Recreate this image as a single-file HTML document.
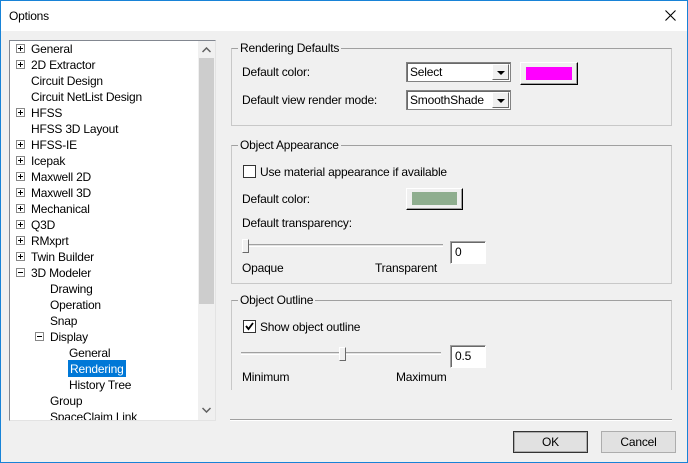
<!DOCTYPE html>
<html><head><meta charset="utf-8"><style>
*{margin:0;padding:0;box-sizing:border-box}
body{width:688px;height:463px;overflow:hidden;background:#f0f0f0;font-family:"Liberation Sans",Arial,sans-serif;font-size:12px;letter-spacing:-0.2px;color:#000;position:relative}
.a{position:absolute;white-space:nowrap}
.win{position:absolute;left:0;top:0;width:688px;height:463px;border:1px solid #1883d7}
.title{position:absolute;left:1px;top:1px;width:686px;height:30px;background:#fff}
.tree{position:absolute;left:9px;top:40px;width:207px;height:381px;background:#fff;border:1px solid #828790;border-right-color:#e3e3e3;border-bottom-color:#e3e3e3}
.pm{position:absolute;width:9px;height:9px;border:1px solid #888;background:#fff}
.pm:before{content:"";position:absolute;left:1px;top:3px;width:5px;height:1px;background:#000}
.pm.p:after{content:"";position:absolute;left:3px;top:1px;width:1px;height:5px;background:#000}
.gb{position:absolute;border:1px solid #c8c8c8;border-top-color:#a0a0a0}
.gb>span{position:absolute;left:6px;top:-8px;background:#f0f0f0;padding:0 2px}
.combo{position:absolute;background:#fff;border:1px solid #828282;box-shadow:inset 1px 1px 0 #696969;height:20px;padding:2px 3px}
.dd{position:absolute;right:1px;top:1px;width:17px;height:16px;background:#f0f0f0;border:1px solid #fff;border-right-color:#696969;border-bottom-color:#696969}
.dd:after{content:"";position:absolute;left:4px;top:6px;border-left:4px solid transparent;border-right:4px solid transparent;border-top:4px solid #000}
.cbtn{position:absolute;background:#f0f0f0;border:1px solid #fff;border-right-color:#000;border-bottom-color:#000;box-shadow:inset -1px -1px 0 #a0a0a0}
.edit{position:absolute;background:#fff;border:1px solid #a0a0a0;border-right-color:#fff;border-bottom-color:#fff;box-shadow:inset 1px 1px 0 #696969;padding:3px 4px}
.track{position:absolute;height:3px;border-top:1px solid #a0a0a0;border-bottom:1px solid #fff;background:#e3e3e3}
.thumb{position:absolute;width:7px;height:14px;background:#f0f0f0;border:1px solid #fff;border-right-color:#696969;border-bottom-color:#696969}
.btn{position:absolute;background:#e1e1e1;border:1px solid #adadad;text-align:center;line-height:20px}
</style></head><body>
<div class="win"></div>
<div class="title"></div>
<div class="a" style="left:9px;top:9px;font-size:12px">Options</div>
<svg class="a" style="left:665px;top:10px" width="11" height="11"><path d="M0.5 0.5L10.5 10.5M10.5 0.5L0.5 10.5" stroke="#000" stroke-width="1.1"/></svg>

<div class="tree">
<div class="a" style="left:188px;top:0;width:17px;height:379px;background:#f0f0f0"></div>
<div class="a" style="left:189px;top:17px;width:15px;height:246px;background:#cdcdcd"></div>
<svg class="a" style="left:192px;top:6px" width="9" height="6"><path d="M0.5 5L4.5 1L8.5 5" stroke="#606060" stroke-width="1.5" fill="none"/></svg>
<svg class="a" style="left:192px;top:366px" width="9" height="6"><path d="M0.5 1L4.5 5L8.5 1" stroke="#606060" stroke-width="1.5" fill="none"/></svg>
</div>
<div class="a" style="left:10px;top:42px;width:188px;height:378px;overflow:hidden">
<div class="pm p" style="left:6px;top:2px"></div><div class="a" style="left:21px;top:0px">General</div>
<div class="pm p" style="left:6px;top:18px"></div><div class="a" style="left:21px;top:16px">2D Extractor</div>
<div class="a" style="left:21px;top:32px">Circuit Design</div>
<div class="a" style="left:21px;top:48px">Circuit NetList Design</div>
<div class="pm p" style="left:6px;top:66px"></div><div class="a" style="left:21px;top:64px">HFSS</div>
<div class="a" style="left:21px;top:80px">HFSS 3D Layout</div>
<div class="pm p" style="left:6px;top:98px"></div><div class="a" style="left:21px;top:96px">HFSS-IE</div>
<div class="pm p" style="left:6px;top:114px"></div><div class="a" style="left:21px;top:112px">Icepak</div>
<div class="pm p" style="left:6px;top:130px"></div><div class="a" style="left:21px;top:128px">Maxwell 2D</div>
<div class="pm p" style="left:6px;top:146px"></div><div class="a" style="left:21px;top:144px">Maxwell 3D</div>
<div class="pm p" style="left:6px;top:162px"></div><div class="a" style="left:21px;top:160px">Mechanical</div>
<div class="pm p" style="left:6px;top:178px"></div><div class="a" style="left:21px;top:176px">Q3D</div>
<div class="pm p" style="left:6px;top:194px"></div><div class="a" style="left:21px;top:192px">RMxprt</div>
<div class="pm p" style="left:6px;top:210px"></div><div class="a" style="left:21px;top:208px">Twin Builder</div>
<div class="pm" style="left:6px;top:226px"></div><div class="a" style="left:21px;top:224px">3D Modeler</div>
<div class="a" style="left:40px;top:240px">Drawing</div>
<div class="a" style="left:40px;top:256px">Operation</div>
<div class="a" style="left:40px;top:272px">Snap</div>
<div class="pm" style="left:25px;top:290px"></div><div class="a" style="left:40px;top:288px">Display</div>
<div class="a" style="left:59px;top:304px">General</div>
<div class="a" style="left:58px;top:318px;background:#0078d7;color:#fff;padding:2px 2px;height:17px;line-height:14px">Rendering</div>
<div class="a" style="left:59px;top:336px">History Tree</div>
<div class="a" style="left:40px;top:352px">Group</div>
<div class="a" style="left:40px;top:368px">SpaceClaim Link</div>
</div>

<div class="gb" style="left:231px;top:48px;width:441px;height:78px"><span>Rendering Defaults</span></div>
<div class="a" style="left:242px;top:65px">Default color:</div>
<div class="a" style="left:242px;top:93px">Default view render mode:</div>
<div class="combo" style="left:406px;top:62px;width:105px">Select<div class="dd"></div></div>
<div class="combo" style="left:406px;top:90px;width:105px">SmoothShade<div class="dd"></div></div>
<div class="cbtn" style="left:520px;top:62px;width:58px;height:23px"><div class="a" style="left:5px;top:4px;width:46px;height:13px;background:#ff00ff"></div></div>

<div class="gb" style="left:231px;top:145px;width:441px;height:139px"><span>Object Appearance</span></div>
<div class="a" style="left:243px;top:165px;width:13px;height:13px;background:#fff;border:1px solid #333"></div>
<div class="a" style="left:260px;top:165px">Use material appearance if available</div>
<div class="a" style="left:242px;top:192px">Default color:</div>
<div class="cbtn" style="left:406px;top:188px;width:57px;height:22px"><div class="a" style="left:5px;top:3px;width:45px;height:13px;background:#8fae8f"></div></div>
<div class="a" style="left:242px;top:216px">Default transparency:</div>
<div class="track" style="left:242px;top:244px;width:201px"></div>
<div class="thumb" style="left:242px;top:239px"></div>
<div class="edit" style="left:450px;top:241px;width:36px;height:23px">0</div>
<div class="a" style="left:242px;top:261px">Opaque</div>
<div class="a" style="left:375px;top:261px">Transparent</div>

<div class="gb" style="left:231px;top:300px;width:441px;height:90px;border-bottom:none"><span>Object Outline</span></div>
<div class="a" style="left:243px;top:320px;width:13px;height:13px;background:#fff;border:1px solid #333"></div>
<svg class="a" style="left:245px;top:322px" width="9" height="9"><path d="M1 4L3.5 7L8 1" stroke="#000" stroke-width="1.8" fill="none"/></svg>
<div class="a" style="left:260px;top:320px">Show object outline</div>
<div class="track" style="left:241px;top:352px;width:200px"></div>
<div class="thumb" style="left:339px;top:347px"></div>
<div class="edit" style="left:450px;top:345px;width:36px;height:23px">0.5</div>
<div class="a" style="left:242px;top:370px">Minimum</div>
<div class="a" style="left:396px;top:370px">Maximum</div>

<div class="a" style="left:230px;top:419px;width:442px;height:2px;border-top:1px solid #a0a0a0;border-bottom:1px solid #fff"></div>
<div class="btn" style="left:513px;top:431px;width:75px;height:22px;border:1px solid #333;box-shadow:inset 0 0 0 1px #adadad">OK</div>
<div class="btn" style="left:601px;top:431px;width:75px;height:22px">Cancel</div>
</body></html>
